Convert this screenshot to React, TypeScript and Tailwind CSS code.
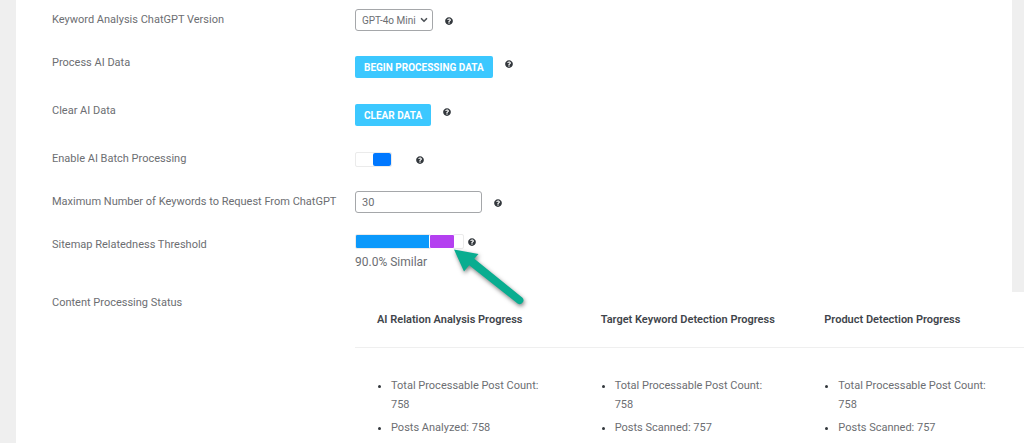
import { useState } from 'react';
import type { ReactNode } from 'react';
import { ChevronDown } from 'lucide-react';
import { FaQuestionCircle } from 'react-icons/fa';

const progress = [
  { title: 'AI Relation Analysis Progress', items: ['Total Processable Post Count: 758', 'Posts Analyzed: 758'] },
  { title: 'Target Keyword Detection Progress', items: ['Total Processable Post Count: 758', 'Posts Scanned: 757'] },
  { title: 'Product Detection Progress', items: ['Total Processable Post Count: 758', 'Posts Scanned: 757'] },
];

function Help({ className = 'mt-2 ml-3' }: { className?: string }) {
  return <FaQuestionCircle aria-hidden="true" className={`size-2 shrink-0 text-[#32373c] ${className}`} />;
}

function Row({ label, htmlFor, className, children }: { label: string; htmlFor: string; className: string; children: ReactNode }) {
  return (
    <div className={`flex items-start ${className}`}>
      <label htmlFor={htmlFor} className="w-[303px] shrink-0 leading-[22px]">{label}</label>
      {children}
    </div>
  );
}

const actionButton =
  'mt-1 h-[22px] rounded-[2px] bg-[#3cc8ff] px-[9px] text-[10px] font-bold text-white uppercase';

export default function App() {
  const [model, setModel] = useState('GPT-4o Mini');
  const [batch, setBatch] = useState(true);
  const [keywords, setKeywords] = useState('30');
  const [threshold, setThreshold] = useState(90);

  return (
    <div className="h-screen overflow-hidden bg-[#efefef] pr-3 pl-4 font-['Roboto',sans-serif] text-[11px] text-[#6c6e72]">
      <main className="min-h-screen bg-white pt-[9px] pl-9">
        <Row label="Keyword Analysis ChatGPT Version" htmlFor="model" className="min-h-[43px]">
          <div className="relative">
            <select
              id="model"
              value={model}
              onChange={(e) => setModel(e.target.value)}
              className="h-[22px] w-[78px] appearance-none rounded-[3px] border border-[#a5a7aa] bg-white pl-1.5 text-[10px]"
            >
              <option>GPT-4o Mini</option>
              <option>GPT-4o</option>
            </select>
            <ChevronDown className="pointer-events-none absolute top-1.5 right-1 size-2.5 text-[#50555a]" strokeWidth={4} />
          </div>
          <Help />
        </Row>

        <Row label="Process AI Data" htmlFor="process" className="min-h-12">
          <button id="process" type="button" className={actionButton}>Begin Processing Data</button>
          <Help />
        </Row>

        <Row label="Clear AI Data" htmlFor="clear" className="min-h-12">
          <button id="clear" type="button" className={actionButton}>Clear Data</button>
          <Help />
        </Row>

        <Row label="Enable AI Batch Processing" htmlFor="batch" className="min-h-[43px]">
          <input
            id="batch"
            type="checkbox"
            checked={batch}
            onChange={(e) => setBatch(e.target.checked)}
            className="mt-1 flex h-[15px] w-[37px] appearance-none rounded-[2px] border border-[#ebebeb] bg-white before:h-[13px] before:w-[18px] before:rounded-[2px] before:bg-[#bbbbbb] checked:justify-end checked:before:bg-[#0078ff]"
          />
          <Help className="mt-2 ml-6" />
        </Row>

        <Row label="Maximum Number of Keywords to Request From ChatGPT" htmlFor="keywords" className="min-h-[43px]">
          <input
            id="keywords"
            type="text"
            value={keywords}
            onChange={(e) => setKeywords(e.target.value)}
            className="h-[22px] w-[127px] rounded-[3px] border border-[#a5a7aa] px-1.5"
          />
          <Help />
        </Row>

        <Row label="Sitemap Relatedness Threshold" htmlFor="threshold" className="min-h-[58px]">
          <div className="relative">
            <div className="flex items-start">
              <input
                id="threshold"
                type="range"
                min={0}
                max={100}
                value={threshold}
                onChange={(e) => setThreshold(Number(e.target.value))}
                style={{ backgroundSize: `${threshold * 0.83}% 100%` }}
                className="h-[15px] w-[109px] appearance-none rounded-[2px] border border-[#ebebeb] bg-white bg-[linear-gradient(#0c99fb,#0c99fb)] bg-no-repeat [&::-webkit-slider-thumb]:h-[15px] [&::-webkit-slider-thumb]:w-[26px] [&::-webkit-slider-thumb]:appearance-none [&::-webkit-slider-thumb]:rounded-[2px] [&::-webkit-slider-thumb]:border [&::-webkit-slider-thumb]:border-white [&::-webkit-slider-thumb]:bg-[#b440f0]"
              />
              <Help className="mt-1 ml-1" />
            </div>
            <p className="mt-1 text-[12px] leading-[18px]">{threshold.toFixed(1)}% Similar</p>
            <svg viewBox="0 0 76 62" className="pointer-events-none absolute top-3.5 left-[97px] h-[62px] w-[76px] drop-shadow-[1px_2px_2px_rgba(0,0,0,0.5)]">
              <path
                d="M2 1.5L26.5 6L22.3 10.8L70.2 49.5A3.8 3.8 0 0 1 65.6 55.5L17.2 17.3L12 23.6Z"
                fill="#09ad90"
              />
            </svg>
          </div>
        </Row>

        <div className="flex items-start">
          <h2 className="w-[303px] shrink-0 leading-[21px]">Content Processing Status</h2>
          <table className="w-[671px] shrink-0 table-fixed bg-white leading-[19px]">
            <thead>
              <tr className="border-b border-[#efefef]">
                {progress.map((col) => (
                  <th key={col.title} className="px-[22px] py-[18px] text-left font-semibold whitespace-nowrap text-[#3f454b]">{col.title}</th>
                ))}
              </tr>
            </thead>
            <tbody>
              <tr>
                {progress.map((col) => (
                  <td key={col.title} className="px-[22px] py-7 align-top">
                    <ul className="list-disc pl-3.5 marker:text-[#32373c]">
                      {col.items.map((item) => (
                        <li key={item} className="mb-1">{item}</li>
                      ))}
                    </ul>
                  </td>
                ))}
              </tr>
            </tbody>
          </table>
        </div>
      </main>
    </div>
  );
}
